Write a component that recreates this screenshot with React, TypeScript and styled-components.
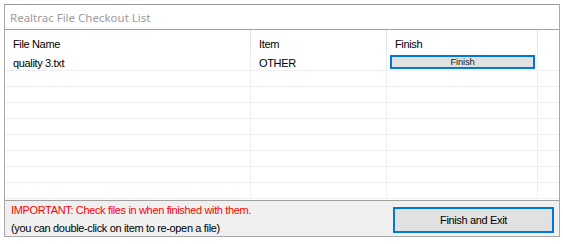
import React from "react";
import styled, { createGlobalStyle } from "styled-components";

const GlobalStyle = createGlobalStyle`
  html, body {
    margin: 0;
    padding: 0;
    background: #ffffff;
  }
  body {
    font-family: "Liberation Sans", Arial, sans-serif;
    font-size: 11px;
    letter-spacing: -0.35px;
    color: #000;
  }
`;

// 窗口外框
const Window = styled.div`
  margin: 4px 0 0 4px;
  width: 554px;
  border: 1px solid #a8a8a8;
  border-top-color: #9a9a9a;
  background: #ffffff;
  display: flex;
  flex-direction: column;
`;

// 标题栏
const TitleBar = styled.div`
  height: 24px;
  display: flex;
  align-items: center;
  padding-left: 5px;
  border-bottom: 1px solid #a0a0a0;
  font-family: "Noto Sans", "Open Sans", sans-serif;
  font-size: 11.5px;
  letter-spacing: 0;
  color: #9b9b9b;
`;

// 表格区
const Grid = styled.div`
  height: 170px;
  display: grid;
  grid-template-columns: 246px 136px 151px 1fr;
  grid-auto-rows: 16px;
  grid-template-rows: 25px;
  align-content: start;
  border-bottom: 1px solid #a0a0a0;
  overflow: hidden;
`;

const HeaderCell = styled.div<{ $last?: boolean }>`
  display: flex;
  align-items: center;
  padding-left: 8px;
  padding-top: 2px;
  border-right: ${(p) => (p.$last ? "none" : "1px solid #e3e3e3")};
`;

const Cell = styled.div<{ $last?: boolean }>`
  display: flex;
  align-items: center;
  padding-left: 8px;
  border-right: ${(p) => (p.$last ? "none" : "1px solid #efefef")};
  border-bottom: 1px solid #efefef;
  box-sizing: border-box;
`;

const ButtonCell = styled(Cell)`
  padding: 0 2px 1px 3px;
`;

const RowButton = styled.button`
  width: 100%;
  height: 14px;
  margin: 0;
  padding: 0;
  border: 2px solid #0078d7;
  background: #e1e1e1;
  font-family: "Liberation Sans", Arial, sans-serif;
  font-size: 9.5px;
  letter-spacing: -0.2px;
  color: #222;
  line-height: 10px;
`;

// 底部面板
const Footer = styled.div`
  height: 35px;
  background: #f0f0f0;
  display: flex;
  align-items: center;
  justify-content: space-between;
  padding: 0 5px 0 6px;
`;

const Notes = styled.div`
  display: flex;
  flex-direction: column;
  gap: 5px;
  padding-top: 1px;
`;

const Note = styled.div<{ $warn?: boolean }>`
  color: ${(p) => (p.$warn ? "#ff0000" : "#000")};
  line-height: 13px;
`;

const ExitButton = styled.button`
  box-sizing: border-box;
  width: 161px;
  height: 26px;
  margin-top: 2px;
  border: 2px solid #0078d7;
  background: #e1e1e1;
  font-family: "Liberation Sans", Arial, sans-serif;
  font-size: 11px;
  letter-spacing: -0.35px;
  color: #000;
`;

const EMPTY_ROWS = 8;

export default function App() {
  return (
    <>
      <GlobalStyle />
      <Window>
        <TitleBar>Realtrac File Checkout List</TitleBar>
        <Grid>
          <HeaderCell>File Name</HeaderCell>
          <HeaderCell>Item</HeaderCell>
          <HeaderCell>Finish</HeaderCell>
          <HeaderCell $last />

          <Cell>quality 3.txt</Cell>
          <Cell>OTHER</Cell>
          <ButtonCell>
            <RowButton>Finish</RowButton>
          </ButtonCell>
          <Cell $last />

          {Array.from({ length: EMPTY_ROWS }).map((_, i) => (
            <React.Fragment key={i}>
              <Cell />
              <Cell />
              <Cell />
              <Cell $last />
            </React.Fragment>
          ))}
        </Grid>
        <Footer>
          <Notes>
            <Note $warn>IMPORTANT: Check files in when finished with them.</Note>
            <Note>(you can double-click on item to re-open a file)</Note>
          </Notes>
          <ExitButton>Finish and Exit</ExitButton>
        </Footer>
      </Window>
    </>
  );
}
